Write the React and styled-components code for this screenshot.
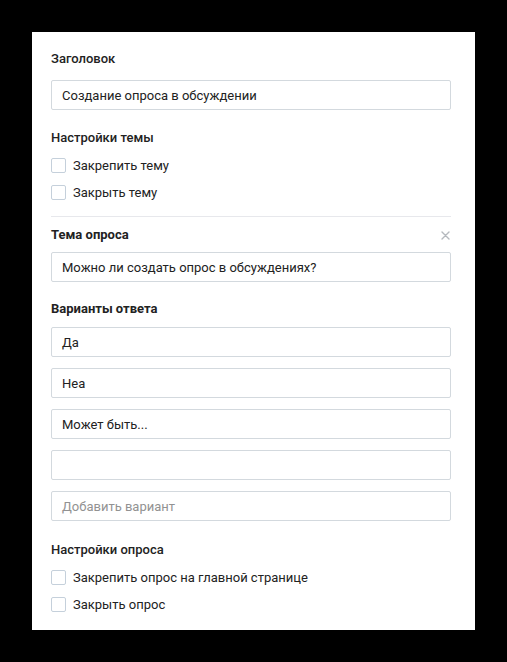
import React from 'react';
import styled, { createGlobalStyle } from 'styled-components';

const GlobalStyle = createGlobalStyle`
  html, body {
    margin: 0;
    padding: 0;
    background: #000;
  }
  body {
    font-family: Roboto, "Open Sans", "Liberation Sans", sans-serif;
    -webkit-font-smoothing: antialiased;
  }
`;

const Page = styled.div`
  width: 507px;
  height: 662px;
  padding: 32px 0 0 32px;
  box-sizing: border-box;
`;

const Panel = styled.div`
  width: 443px;
  height: 598px;
  box-sizing: border-box;
  background: #fff;
  padding: 19px 24px 0 19px;
  display: flex;
  flex-direction: column;
`;

const Label = styled.div`
  display: flex;
  align-items: center;
  justify-content: space-between;
  font-size: 13px;
  line-height: 16px;
  color: #222;
  font-weight: ${(p) => (p.$bold ? 700 : 500)};
  margin-top: ${(p) => p.$top || 0}px;
  margin-bottom: ${(p) => p.$bottom || 0}px;
`;

const Close = styled.span`
  width: 10px;
  height: 10px;
  margin-right: 1px;
  display: flex;
  align-items: center;
  justify-content: center;
`;

const Field = styled.div`
  height: 30px;
  box-sizing: border-box;
  border: 1px solid #d3d9de;
  border-radius: 2px;
  padding: 0 10px;
  display: flex;
  align-items: center;
  font-size: 13px;
  color: ${(p) => (p.$placeholder ? '#929292' : '#222')};
`;

const FieldList = styled.div`
  display: flex;
  flex-direction: column;
  gap: 11px;
`;

const CheckList = styled.div`
  display: flex;
  flex-direction: column;
  margin-top: ${(p) => p.$top || 0}px;
`;

const CheckRow = styled.label`
  height: 27px;
  display: flex;
  align-items: center;
  gap: 7px;
  font-size: 13px;
  color: #222;
`;

const Box = styled.span`
  width: 15px;
  height: 15px;
  box-sizing: border-box;
  border: 1px solid #c5d0db;
  border-radius: 2px;
  background: #fff;
`;

const Divider = styled.div`
  height: 1px;
  background: #e7e8ec;
  margin: 10px 0 10px;
`;

function Check({ children }) {
  return (
    <CheckRow>
      <Box />
      {children}
    </CheckRow>
  );
}

export default function App() {
  return (
    <>
      <GlobalStyle />
      <Page>
        <Panel>
          <Label $bottom={13}>Заголовок</Label>
          <Field>Создание опроса в обсуждении</Field>

          <Label $top={20}>Настройки темы</Label>
          <CheckList $top={6}>
            <Check>Закрепить тему</Check>
            <Check>Закрыть тему</Check>
          </CheckList>

          <Divider />

          <Label $bold $bottom={9}>
            Тема опроса
            <Close>
              <svg width="9" height="9" viewBox="0 0 9 9">
                <path d="M1 1L8 8M8 1L1 8" stroke="#b5b9be" strokeWidth="1.4" strokeLinecap="round" />
              </svg>
            </Close>
          </Label>
          <Field>Можно ли создать опрос в обсуждениях?</Field>

          <Label $bold $top={19} $bottom={10}>Варианты ответа</Label>
          <FieldList>
            <Field>Да</Field>
            <Field>Неа</Field>
            <Field>Может быть...</Field>
            <Field />
            <Field $placeholder>Добавить вариант</Field>
          </FieldList>

          <Label $top={21}>Настройки опроса</Label>
          <CheckList $top={6}>
            <Check>Закрепить опрос на главной странице</Check>
            <Check>Закрыть опрос</Check>
          </CheckList>
        </Panel>
      </Page>
    </>
  );
}
